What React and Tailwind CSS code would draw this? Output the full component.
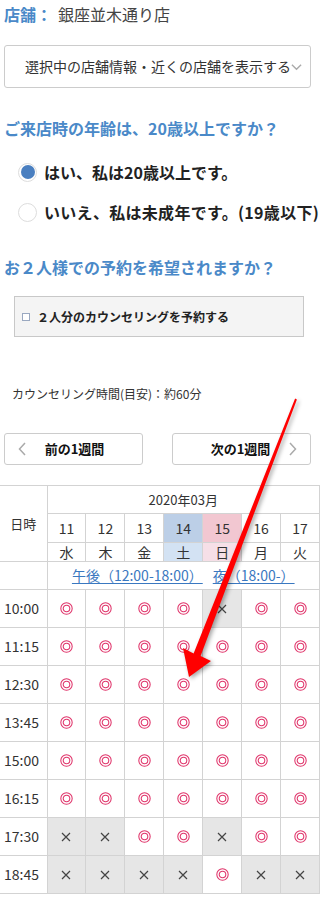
import React from "react";

const days = [
  { d: "11", w: "水" },
  { d: "12", w: "木" },
  { d: "13", w: "金" },
  { d: "14", w: "土", sat: true },
  { d: "15", w: "日", sun: true },
  { d: "16", w: "月" },
  { d: "17", w: "火" },
];

const slots = [
  ["10:00", "ooooxoo"],
  ["11:15", "ooooooo"],
  ["12:30", "ooooooo"],
  ["13:45", "ooooooo"],
  ["15:00", "ooooooo"],
  ["16:15", "ooooooo"],
  ["17:30", "xxooxoo"],
  ["18:45", "xxxxoxx"],
];

function Maru() {
  return (
    <svg width="13" height="13" viewBox="0 0 13 13" className="mx-auto block">
      <circle cx="6.5" cy="6.5" r="5.7" fill="none" stroke="#e0356b" strokeWidth="1.05" />
      <circle cx="6.5" cy="6.5" r="3.3" fill="none" stroke="#e0356b" strokeWidth="1.05" />
    </svg>
  );
}

function Batsu() {
  return (
    <svg width="10" height="10" viewBox="0 0 10 10" className="mx-auto block">
      <path d="M1 1L9 9M9 1L1 9" stroke="#444" strokeWidth="1.2" />
    </svg>
  );
}

function Chevron({ dir }) {
  return (
    <svg width="8" height="14" viewBox="0 0 8 14">
      <path
        d={dir === "left" ? "M7 1L1.5 7L7 13" : "M1 1L6.5 7L1 13"}
        fill="none"
        stroke="#aaa"
        strokeWidth="1.5"
      />
    </svg>
  );
}

export default function App() {
  return (
    <div className="relative w-[320px] h-[898px] overflow-hidden bg-white font-['Noto_Sans_CJK_JP',sans-serif] text-[#333]">
      <div className="px-1 pt-[2px] text-[16px] leading-6">
        <span className="font-bold text-[#4a89c8]">店舗：</span>
        <span className="ml-[6px] text-[#444]">銀座並木通り店</span>
      </div>

      <div className="mx-1 mt-[19px] w-[307px] h-[43px] border border-[#ccc] rounded-[3px] flex items-center pl-[20px] pr-2 text-[14px]">
        <span className="flex-1 whitespace-nowrap">選択中の店舗情報・近くの店舗を表示する</span>
        <svg width="12" height="8" viewBox="0 0 12 8">
          <path d="M1 1.5L6 6.5L11 1.5" fill="none" stroke="#aaa" strokeWidth="1.5" />
        </svg>
      </div>

      <div className="px-1 mt-[28px] text-[16px] leading-6 font-bold text-[#4a89c8]">
        ご来店時の年齢は、20歳以上ですか？
      </div>

      <div className="mt-[20px] h-6 flex items-center pl-[18px] whitespace-nowrap">
        <span className="w-[19px] h-[19px] rounded-full border border-[#ddd] flex items-center justify-center">
          <span className="w-[14px] h-[14px] rounded-full bg-[#4a7fc0]" />
        </span>
        <span className="ml-[7px] text-[16px] font-bold text-[#222]">はい、私は20歳以上です。</span>
      </div>
      <div className="mt-[16px] h-6 flex items-center pl-[18px] whitespace-nowrap">
        <span className="w-[19px] h-[19px] shrink-0 rounded-full border border-[#ddd] bg-white" />
        <span className="ml-[7px] text-[16px] font-bold text-[#222] tracking-[0.3px]">いいえ、私は未成年です。(19歳以下)</span>
      </div>

      <div className="px-1 mt-[31px] text-[16px] leading-6 font-bold text-[#4a89c8]">
        お２人様での予約を希望されますか？
      </div>

      <div className="ml-[14px] mt-[17px] w-[290px] h-[41px] bg-[#f4f4f4] border border-[#c8c8c8] flex items-center pl-[7px]">
        <span className="w-[8px] h-[8px] border border-[#9aa8c0] bg-white" />
        <span className="ml-[7px] text-[12px] font-bold text-[#222]">２人分のカウンセリングを予約する</span>
      </div>

      <div className="pl-3 mt-[48px] text-[12px] leading-[18px] text-[#333]">
        カウンセリング時間(目安)：約60分
      </div>

      <div className="mt-[30px] px-1 flex gap-[29px]">
        <div className="w-[139px] h-[32px] border border-[#ccc] rounded-[3px] flex items-center px-[13px]">
          <Chevron dir="left" />
          <span className="flex-1 text-center text-[13px] font-bold text-[#111] pr-[6px]">前の1週間</span>
        </div>
        <div className="w-[139px] h-[32px] border border-[#ccc] rounded-[3px] flex items-center px-[13px]">
          <span className="flex-1 text-center text-[13px] font-bold text-[#111] pl-[6px]">次の1週間</span>
          <Chevron dir="right" />
        </div>
      </div>

      <table className="mt-[20px] w-[320px] table-fixed text-[14px] text-[#333]">
        <colgroup>
          <col className="w-[47px]" />
          {days.map((d) => (
            <col key={d.d} />
          ))}
        </colgroup>
        <tbody>
          <tr className="h-[28px]">
            <td rowSpan={3} className="border-t border-b border-r border-[#d3d3d3] text-center text-[13px]">日時</td>
            <td colSpan={7} className="border border-[#d3d3d3] text-center text-[13px]">2020年03月</td>
          </tr>
          <tr className="h-[29px]">
            {days.map((d) => (
              <td
                key={d.d}
                className={`border border-[#d3d3d3] text-center ${d.sat ? "bg-[#bccfe7]" : d.sun ? "bg-[#f2c7d1]" : ""}`}
              >
                {d.d}
              </td>
            ))}
          </tr>
          <tr className="h-[19px]">
            {days.map((d) => (
              <td
                key={d.d}
                className={`border border-[#d3d3d3] text-center leading-[18px] ${d.sat ? "bg-[#d3e2f3]" : d.sun ? "bg-[#f6dfe7]" : ""}`}
              >
                {d.w}
              </td>
            ))}
          </tr>
          <tr className="h-[28px]">
            <td className="border-b border-r border-[#d3d3d3]" />
            <td colSpan={7} className="border border-[#d3d3d3] text-center text-[#3a78c0] whitespace-nowrap">
              <span className="underline underline-offset-2">午後（12:00-18:00）</span>
              <span className="ml-[10px] underline underline-offset-2">夜（18:00-）</span>
            </td>
          </tr>
          {slots.map(([time, row]) => (
            <tr key={time} className="h-[38px]">
              <td className="border-b border-r border-[#d3d3d3] pl-1">{time}</td>
              {row.split("").map((c, i) => (
                <td
                  key={i}
                  className={`border border-[#d3d3d3] ${c === "x" ? "bg-[#e6e6e6]" : "bg-white"}`}
                >
                  {c === "x" ? <Batsu /> : <Maru />}
                </td>
              ))}
            </tr>
          ))}
        </tbody>
      </table>

      <svg
        className="absolute left-0 top-0 pointer-events-none drop-shadow-[2px_2px_2px_rgba(0,0,0,0.35)]"
        width="320"
        height="898"
        viewBox="0 0 320 898"
      >
        <polygon
          points="295.1,398.6 296.9,399.4 200.6,656 211,661 189,677 183,648 193.6,653.6"
          fill="#ff0000"
        />
      </svg>
    </div>
  );
}
